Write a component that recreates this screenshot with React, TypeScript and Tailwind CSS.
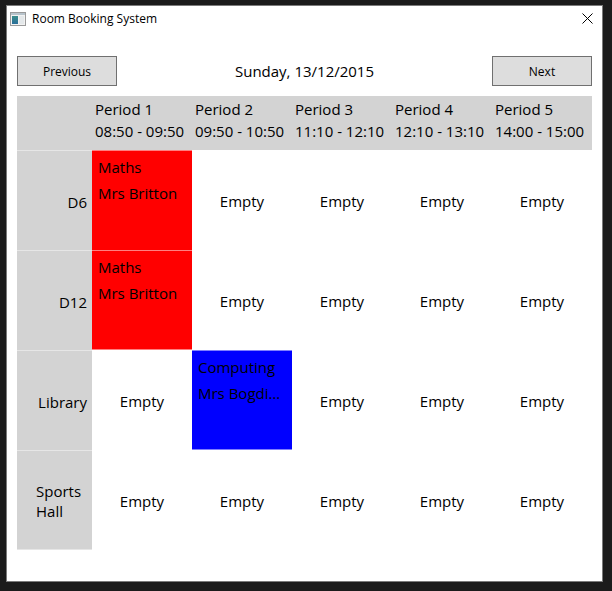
import React from "react";

type Booking = { subject: string; teacher: string; color: string };

const periods = [
  { name: "Period 1", time: "08:50 - 09:50" },
  { name: "Period 2", time: "09:50 - 10:50" },
  { name: "Period 3", time: "11:10 - 12:10" },
  { name: "Period 4", time: "12:10 - 13:10" },
  { name: "Period 5", time: "14:00 - 15:00" },
];

const red = "bg-[#ff0000] border-b-0";
const redLast = "bg-[#ff0000] border-b border-b-[#ff8080]";
const blue = "bg-[#0000ff] border-b border-b-[#8080ff]";

const rooms: { name: string; cells: (Booking | null)[] }[] = [
  { name: "D6", cells: [{ subject: "Maths", teacher: "Mrs Britton", color: red }, null, null, null, null] },
  { name: "D12", cells: [{ subject: "Maths", teacher: "Mrs Britton", color: redLast }, null, null, null, null] },
  { name: "Library", cells: [null, { subject: "Computing", teacher: "Mrs Bogdi…", color: blue }, null, null, null] },
  { name: "Sports Hall", cells: [null, null, null, null, null] },
];

function AppIcon() {
  return (
    <svg width="16" height="14" viewBox="0 0 16 14">
      <rect x="0.5" y="0.5" width="15" height="13" fill="#f2f2f2" stroke="#9a9a9a" />
      <rect x="1" y="1" width="14" height="2" fill="#b8c4cc" />
      <defs>
        <linearGradient id="g" x1="0" y1="0" x2="0" y2="1">
          <stop offset="0" stopColor="#3c8d8a" />
          <stop offset="1" stopColor="#2a6f9a" />
        </linearGradient>
      </defs>
      <rect x="2" y="4" width="6" height="8" fill="url(#g)" />
      <rect x="9" y="4" width="5" height="8" fill="#e4e8ea" />
    </svg>
  );
}

export default function App() {
  return (
    <div className="min-h-screen w-[612px] h-[591px] bg-[#1b1b1b] pt-[5px] pl-[6px] font-['Open_Sans','Noto_Sans',sans-serif] text-black">
      <div className="w-[597px] h-[577px] border border-[#7a7a7a] bg-white flex flex-col">
        {/* title bar */}
        <div className="h-[30px] flex items-center pl-[3px] pr-[9px] pb-[5px]">
          <AppIcon />
          <span className="ml-[6px] text-[12px] leading-none">Room Booking System</span>
          <svg className="ml-auto" width="11" height="11" viewBox="0 0 11 11">
            <path d="M0.5 0.5L10.5 10.5M10.5 0.5L0.5 10.5" stroke="#000" strokeWidth="1" />
          </svg>
        </div>

        <div className="px-[10px] pt-[20px]">
          <div className="flex items-center h-[30px]">
            <button className="w-[100px] h-[30px] border border-[#707070] bg-[#dddddd] text-[12px] pt-[1px]">Previous</button>
            <div className="flex-1 text-center text-[15px]">Sunday, 13/12/2015</div>
            <button className="w-[100px] h-[30px] border border-[#707070] bg-[#dddddd] text-[12px] pt-[1px]">Next</button>
          </div>

          <div className="mt-[10px] w-[575px] text-[15px]">
            <div className="flex h-[54px] bg-[#d3d3d3]">
              <div className="w-[75px]" />
              {periods.map((p) => (
                <div key={p.name} className="w-[100px] pl-[3px] pt-[2px] leading-[22px] whitespace-nowrap">
                  <div>{p.name}</div>
                  <div>{p.time}</div>
                </div>
              ))}
            </div>

            {rooms.map((room, ri) => (
              <div key={room.name} className="flex">
                <div
                  className={`w-[75px] h-[100px] bg-[#d3d3d3] border-t border-t-[#e6e6e6] flex items-center justify-end pr-[5px] ${
                    ri === rooms.length - 1 ? "border-b border-b-[#e6e6e6]" : ""
                  }`}
                >
                  {room.name === "Sports Hall" ? (
                    <div className="w-[51px] text-left leading-[20px] pt-[2px]">
                      Sports
                      <br />
                      Hall
                    </div>
                  ) : (
                    <span className="pt-[3px]">{room.name}</span>
                  )}
                </div>
                {room.cells.map((cell, ci) =>
                  cell ? (
                    <div
                      key={ci}
                      className={`w-[100px] h-[100px] border-t border-t-white/50 px-[6px] pt-[3px] leading-[26px] whitespace-nowrap overflow-hidden ${cell.color}`}
                    >
                      <div>{cell.subject}</div>
                      <div>{cell.teacher}</div>
                    </div>
                  ) : (
                    <div key={ci} className="w-[100px] h-[100px] flex items-center justify-center pt-[3px]">
                      Empty
                    </div>
                  )
                )}
              </div>
            ))}
          </div>
        </div>
      </div>
    </div>
  );
}
